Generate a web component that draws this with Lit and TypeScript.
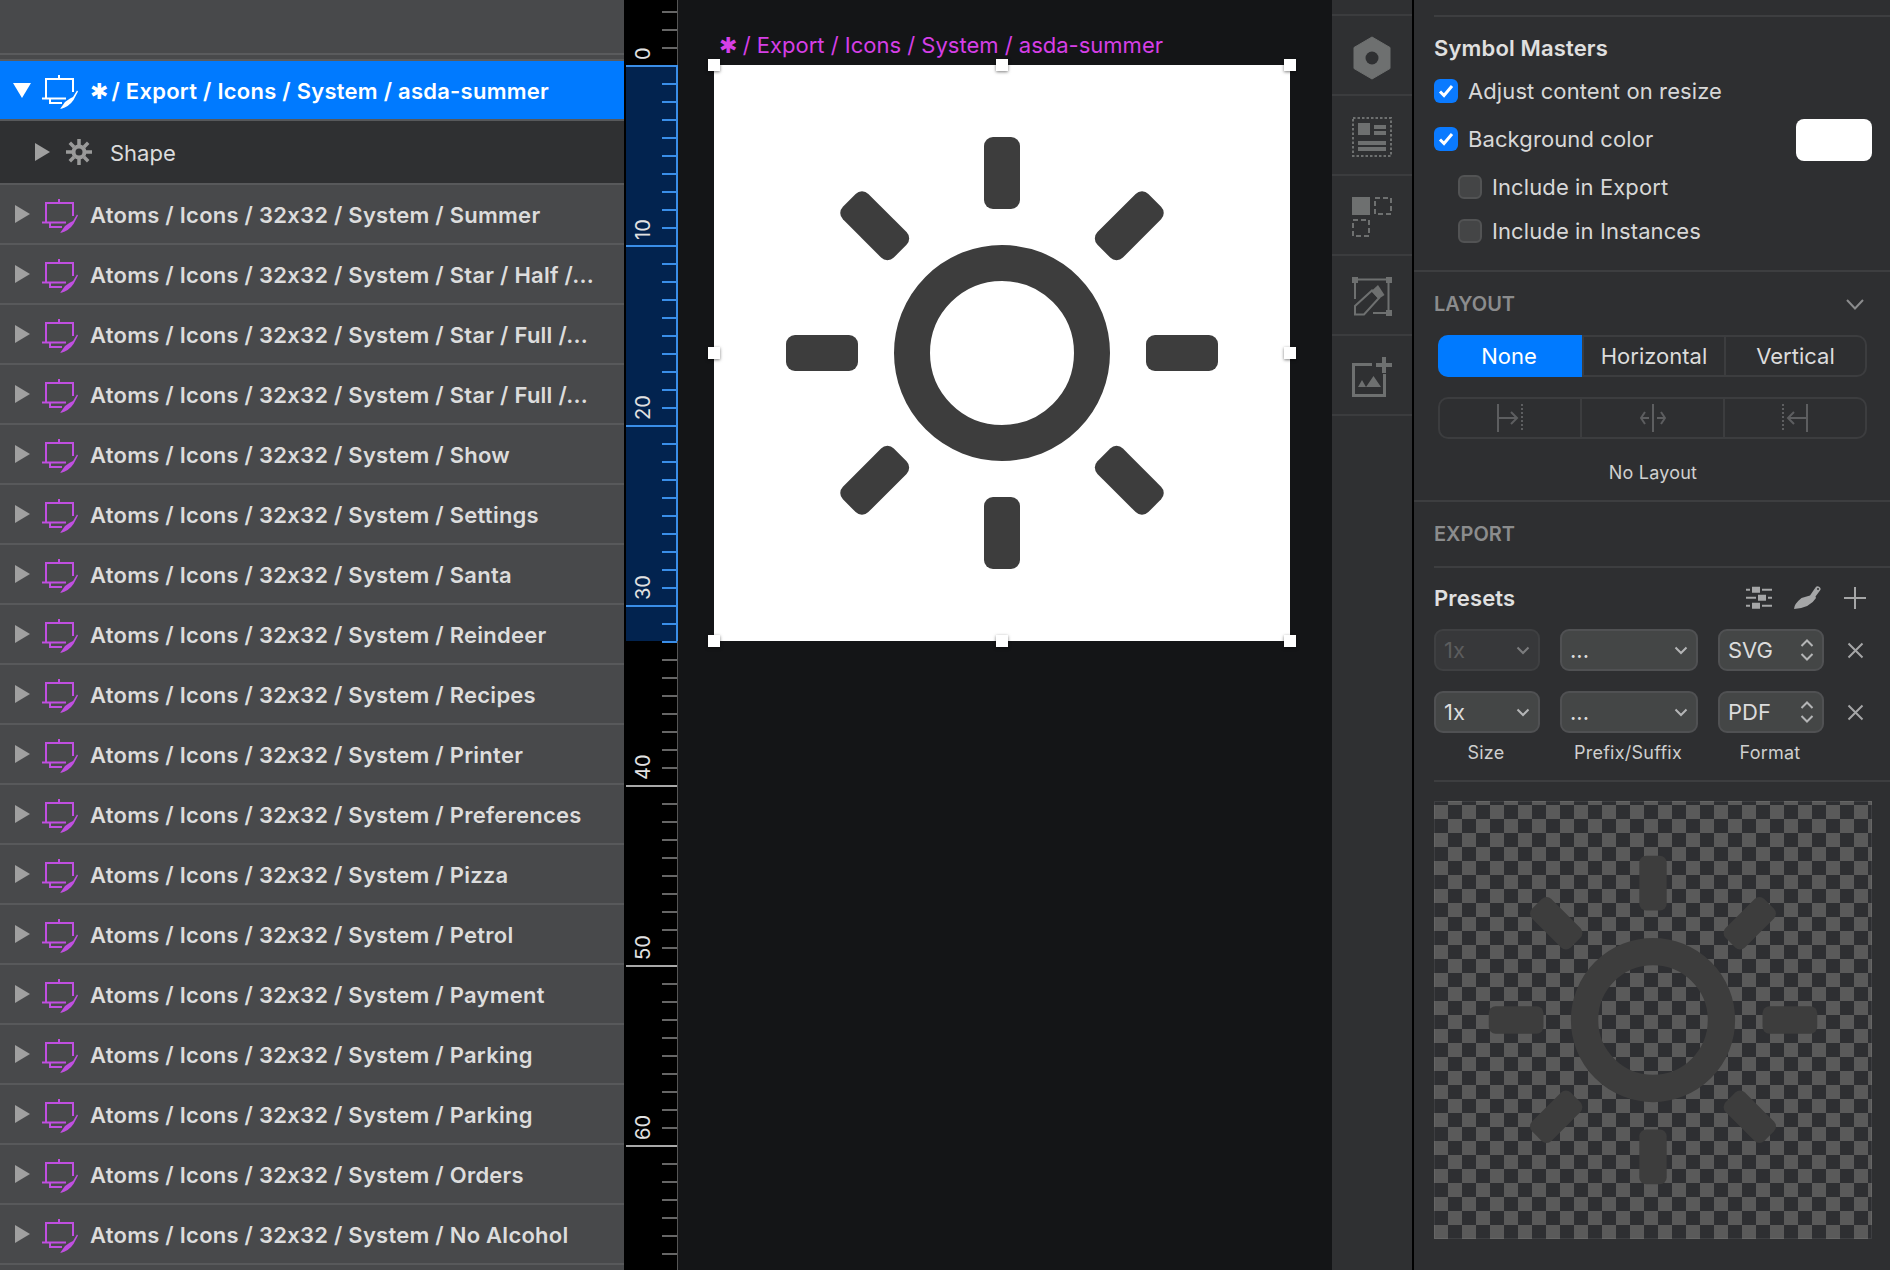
import { LitElement, html, css, svg } from 'lit';
import { customElement } from 'lit/decorators.js';

const ROWS = [
  'Atoms / Icons / 32x32 / System / Summer',
  'Atoms / Icons / 32x32 / System / Star / Half /...',
  'Atoms / Icons / 32x32 / System / Star / Full /...',
  'Atoms / Icons / 32x32 / System / Star / Full /...',
  'Atoms / Icons / 32x32 / System / Show',
  'Atoms / Icons / 32x32 / System / Settings',
  'Atoms / Icons / 32x32 / System / Santa',
  'Atoms / Icons / 32x32 / System / Reindeer',
  'Atoms / Icons / 32x32 / System / Recipes',
  'Atoms / Icons / 32x32 / System / Printer',
  'Atoms / Icons / 32x32 / System / Preferences',
  'Atoms / Icons / 32x32 / System / Pizza',
  'Atoms / Icons / 32x32 / System / Petrol',
  'Atoms / Icons / 32x32 / System / Payment',
  'Atoms / Icons / 32x32 / System / Parking',
  'Atoms / Icons / 32x32 / System / Parking',
  'Atoms / Icons / 32x32 / System / Orders',
  'Atoms / Icons / 32x32 / System / No Alcohol',
];

const artboardIcon = (color: string) => html`
  <svg class="symbol" width="36" height="34" viewBox="0 0 36 34" fill="none" stroke=${color} stroke-width="2">
    <path d="M4 23V4H31V17M17 0V4M0 23.5H24M8 24V28H20" />
    <path d="M35 15.5L36 16.5L31.500 25Q27 32 18 34Q21 30 23 27L28 23.500L31 22Z" fill=${color} stroke="none" />
  </svg>
`;

const sun = () => svg`
  <circle cx="16" cy="16" r="5" fill="none" stroke="#3d3d3d" stroke-width="2" />
  ${[0, 45, 90, 135, 180, 225, 270, 315].map(
    a => svg`<rect x="15" y="4" width="2" height="4" rx="0.5" fill="#3d3d3d" transform="rotate(${a} 16 16)" />`
  )}
`;

const chevron = () => html`
  <svg class="chev" width="14" height="9" viewBox="0 0 14 9" fill="none" stroke="#b4b5b6" stroke-width="2">
    <path d="M1.500 1.500L7 7L12.500 1.500" />
  </svg>
`;

const stepper = () => html`
  <svg class="chev" width="14" height="22" viewBox="0 0 14 22" fill="none" stroke="#b4b5b6" stroke-width="2">
    <path d="M1.500 7L7 1.500L12.500 7M1.500 15L7 20.500L12.500 15" />
  </svg>
`;

const closeIcon = () => html`
  <svg class="x" width="17" height="17" viewBox="0 0 17 17" fill="none" stroke="#a5a6a7" stroke-width="2">
    <path d="M1.500 1.500L15.500 15.500M15.500 1.500L1.500 15.500" />
  </svg>
`;

@customElement('app-root')
export class AppRoot extends LitElement {
  static styles = css`
    :host {
      display: flex;
      width: 1890px;
      height: 1270px;
      overflow: hidden;
      background: #141517;
      font-family: Inter, 'DejaVu Sans', sans-serif;
      font-feature-settings: 'calt' 0;
      color: #dcdcdc;
    }
    .layers {
      width: 624px;
      flex: none;
      background: #48494b;
      display: flex;
      flex-direction: column;
    }
    .top-gap {
      height: 53px;
      border-bottom: 2px solid #5a5b5d;
      box-sizing: content-box;
    }
    .top-gap-2 {
      height: 4px;
      border-bottom: 2px solid #5a5b5d;
    }
    .row {
      height: 58px;
      flex: none;
      display: flex;
      align-items: center;
      border-bottom: 2px solid #58595b;
      white-space: nowrap;
      font-size: 22px;
      letter-spacing: 0.25px;
      font-weight: 600;
      color: #dcdcdc;
      padding-left: 15px;
    }
    .row span {
      padding-top: 2px;
    }
    .row .star {
      padding: 0;
      margin-right: -3px;
    }
    .row.selected {
      background: #007aff;
      color: #fff;
      padding-left: 13px;
    }
    .row.child {
      height: 62px;
      background: #2f3032;
      padding-left: 35px;
      font-weight: 400;
      letter-spacing: 0;
    }
    .symbol {
      margin: 3px 12px 0 12px;
    }
    .row.selected .symbol {
      margin-left: 11px;
    }
    .gear {
      margin-left: 16px;
      margin-right: 18px;
    }
    .ruler {
      width: 54px;
      flex: none;
      display: block;
      background: #000;
    }
    .ruler text {
      font-family: Inter, sans-serif;
      font-size: 20px;
      fill: #e2e2e2;
    }
    .canvas {
      width: 654px;
      flex: none;
      box-sizing: border-box;
      padding-left: 36px;
    }
    .board-label {
      height: 65px;
      box-sizing: border-box;
      padding: 32px 0 0 5px;
      font-size: 22px;
      line-height: 26px;
      color: #d63fe6;
      white-space: nowrap;
    }
    .board-label .star {
      margin-right: -1px;
    }
    .board {
      position: relative;
      width: 576px;
      height: 576px;
      background: #fff;
    }
    .board > svg {
      display: block;
    }
    .handle {
      position: absolute;
      width: 12px;
      height: 12px;
      margin: -6px 0 0 -6px;
      background: #fff;
      box-shadow: 0 1px 3px rgba(0, 0, 0, 0.5);
    }
    .strip {
      width: 80px;
      flex: none;
      background: #2f3032;
      border-right: 2px solid #000;
    }
    .strip-top {
      height: 14px;
      border-bottom: 2px solid #3b3c3e;
    }
    .strip-cell {
      height: 80px;
      box-sizing: border-box;
      border-bottom: 2px solid #3b3c3e;
    }
    .strip-cell svg {
      display: block;
    }
    .inspector {
      flex: 1;
      background: #2e2f31;
      min-width: 0;
    }
    .sec-symbol {
      height: 272px;
      box-sizing: border-box;
      padding: 15px 18px 0 20px;
      border-bottom: 2px solid #3d3e40;
    }
    .rule {
      height: 2px;
      background: #3d3e40;
      margin-right: -18px;
    }
    .title {
      font-size: 22px;
      letter-spacing: 0.15px;
      line-height: 24px;
      font-weight: 600;
      color: #e0e0e0;
    }
    .sec-symbol .title {
      margin-top: 19px;
    }
    .check-row {
      display: flex;
      align-items: center;
      height: 24px;
      margin-top: 19px;
      font-size: 22px;
      letter-spacing: 0.1px;
      color: #d8d8d8;
    }
    .check-row + .check-row {
      margin-top: 24px;
    }
    .check-row.sub {
      padding-left: 24px;
    }
    .check-row.sub + .check-row.sub {
      margin-top: 20px;
    }
    .box {
      width: 24px;
      height: 24px;
      box-sizing: border-box;
      border-radius: 6px;
      margin-right: 10px;
      background: #0a7aff;
      display: flex;
      align-items: center;
      justify-content: center;
    }
    .box.off {
      background: #444546;
      border: 2px solid #525354;
    }
    .swatch {
      width: 76px;
      height: 42px;
      border-radius: 8px;
      background: #fff;
      margin-left: auto;
      margin-top: 2px;
    }
    .sec-layout {
      height: 230px;
      box-sizing: border-box;
      padding: 20px 0 0 20px;
      border-bottom: 2px solid #3d3e40;
    }
    .caps {
      font-size: 20px;
      line-height: 24px;
      font-weight: 600;
      color: #8b8c8d;
      display: flex;
      align-items: center;
      justify-content: space-between;
      padding-right: 26px;
    }
    .segments {
      display: grid;
      grid-template-columns: 142px 142px 1fr;
      width: 429px;
      height: 42px;
      margin: 19px 0 0 4px;
      box-sizing: border-box;
      border: 2px solid #3c3d3f;
      border-radius: 10px;
      font-size: 22px;
      color: #dcdcdc;
    }
    .segments > div {
      display: flex;
      align-items: center;
      justify-content: center;
    }
    .segments > div + div {
      border-left: 2px solid #3c3d3f;
    }
    .segments .on {
      background: #007aff;
      color: #fff;
      margin: -2px 0 -2px -2px;
      padding-right: 2px;
      border-radius: 10px 0 0 10px;
    }
    .segments.icons {
      grid-template-columns: 140px 143px 1fr;
      margin-top: 20px;
    }
    .no-layout {
      margin: 22px 18px 0 0;
      text-align: center;
      font-size: 18px;
      letter-spacing: 0.2px;
      line-height: 24px;
      color: #d0d0d0;
    }
    .sec-export {
      padding: 20px 18px 0 20px;
    }
    .sec-export .caps {
      padding: 0;
    }
    .sec-export .rule {
      margin-top: 20px;
    }
    .presets-head {
      display: flex;
      align-items: center;
      height: 24px;
      margin-top: 18px;
    }
    .presets-head .tools {
      margin-left: auto;
      margin-right: 6px;
      display: block;
    }
    .export-grid {
      display: grid;
      grid-template-columns: 106px 138px 106px 1fr;
      column-gap: 20px;
      row-gap: 20px;
      margin-top: 19px;
      align-items: center;
    }
    .select {
      height: 42px;
      box-sizing: border-box;
      display: flex;
      align-items: center;
      justify-content: space-between;
      padding: 0 8px 0 8px;
      background: #444646;
      border: 2px solid #505153;
      border-radius: 9px;
      font-size: 22px;
      color: #dcdcdc;
    }
    .select.disabled {
      background: #37383a;
      border-color: #3f4042;
      color: #5c5d5e;
    }
    .select.disabled .chev {
      opacity: 0.55;
    }
    .x {
      display: block;
      margin-left: 3px;
    }
    .labels {
      display: grid;
      grid-template-columns: 106px 138px 106px;
      column-gap: 20px;
      margin-top: 9px;
      font-size: 18px;
      letter-spacing: 0.25px;
      line-height: 22px;
      text-align: center;
      color: #cfcfcf;
    }
    .labels > div {
      padding-right: 2px;
    }
    .sec-export .rule.bottom {
      margin-top: 16px;
    }
    .preview {
      margin-top: 19px;
      width: 438px;
      height: 438px;
      background: repeating-conic-gradient(#5a5a5a 0 25%, #2e2f32 0 50%) 0 -10px / 28px 28px;
      box-shadow: inset 0 0 0 1px rgba(255, 255, 255, 0.08);
    }
    .preview svg {
      display: block;
    }
  `;

  private _ruler() {
    const ticks = [];
    for (let i = -3; i * 18 + 65 < 1270; i++) {
      const y = 65 + i * 18;
      const major = i % 10 === 0;
      const active = i >= 0 && i <= 32;
      const color = active ? '#3a8ee8' : major ? '#a8a8a8' : '#666';
      ticks.push(svg`<rect x=${major ? 2 : 38} y=${y} width=${major ? 51 : 15} height="2" fill=${color} />`);
      if (major && i >= 0) {
        ticks.push(svg`<text transform="translate(26 ${y - 5}) rotate(-90)">${i}</text>`);
      }
    }
    return html`
      <svg class="ruler" width="54" height="1270" viewBox="0 0 54 1270">
        <rect x="2" y="65" width="51" height="576" fill="#02234f" />
        <rect x="53" y="0" width="1" height="1270" fill="#555" />
        <rect x="52" y="65" width="2" height="576" fill="#3a8ee8" />
        ${ticks}
      </svg>
    `;
  }

  private _strip() {
    const c = '#6e7070';
    const cells = [
      svg`
        <path d="M40 21L58 31.500V52.500L40 63L22 52.500V31.500Z" fill=${c} stroke=${c} stroke-linejoin="round" />
        <circle cx="40" cy="42" r="6.500" fill="#2f3032" />`,
      svg`
        <rect x="21" y="22" width="38" height="38" fill="none" stroke=${c} stroke-width="2" stroke-dasharray="2.500 2" />
        <rect x="26" y="27" width="12" height="12" fill=${c} />
        <rect x="42" y="29" width="12" height="4" fill=${c} />
        <rect x="42" y="35" width="12" height="4" fill=${c} />
        <rect x="26" y="45" width="28" height="4" fill=${c} />
        <rect x="26" y="51" width="28" height="4" fill=${c} />`,
      svg`
        <rect x="20" y="21" width="18" height="18" fill=${c} />
        <rect x="43" y="22" width="16" height="16" fill="none" stroke=${c} stroke-width="2" stroke-dasharray="5 3" />
        <rect x="21" y="44" width="16" height="16" fill="none" stroke=${c} stroke-width="2" stroke-dasharray="5 3" />`,
      svg`
        <path d="M26 23.500H54M56.500 27V54M54 57H41M23 27V43" fill="none" stroke=${c} stroke-width="2" />
        <rect x="20" y="21" width="6" height="6" fill=${c} />
        <rect x="54" y="21" width="6" height="6" fill=${c} />
        <rect x="54" y="54" width="6" height="6" fill=${c} />
        <path d="M23 58.500V50L40 34.500L47 42L32 58.500Z" fill="none" stroke=${c} stroke-width="2" />
        <path d="M39.500 35L46 29L52.500 39L46.500 43Z" fill=${c} />`,
      svg`
        <path d="M40 28.500H21.500V59.500H52.500V38" fill="none" stroke=${c} stroke-width="3" />
        <rect x="44" y="27" width="16" height="4" fill=${c} />
        <rect x="50" y="21" width="4" height="16" fill=${c} />
        <path d="M26 51L30 44L34 51ZM34 51L41.500 40L49 51Z" fill=${c} />`,
    ];
    return cells.map(
      cell => html`<div class="strip-cell"><svg width="80" height="78" viewBox="0 0 80 78">${cell}</svg></div>`
    );
  }

  private _alignIcons() {
    const c = '#5d5e60';
    return [
      svg`<path d="M1 1V29M2 15H20M14 9L20 15L14 21" fill="none" stroke=${c} stroke-width="2" /><path d="M25 1V29" stroke=${c} stroke-width="2" stroke-dasharray="2 2" />`,
      svg`<path d="M13 1V29M9 15H1M5 9L1 15L5 21M17 15H25M21 9L25 15L21 21" fill="none" stroke=${c} stroke-width="2" />`,
      svg`<path d="M25 1V29M24 15H6M12 9L6 15L12 21" fill="none" stroke=${c} stroke-width="2" /><path d="M1 1V29" stroke=${c} stroke-width="2" stroke-dasharray="2 2" />`,
    ].map(icon => html`<div><svg width="26" height="30" viewBox="0 0 26 30">${icon}</svg></div>`);
  }

  private _check() {
    return html`
      <svg width="16" height="14" viewBox="0 0 16 14" fill="none" stroke="#fff" stroke-width="3">
        <path d="M2 7.500L6 11.500L14 2" />
      </svg>
    `;
  }

  render() {
    const handles = [
      [0, 0], [288, 0], [576, 0],
      [0, 288], [576, 288],
      [0, 576], [288, 576], [576, 576],
    ];
    return html`
      <div class="layers">
        <div class="top-gap"></div>
        <div class="top-gap-2"></div>
        <div class="row selected">
          <svg width="18" height="15" viewBox="0 0 18 15"><path d="M0 0H18L9 15Z" fill="#fff" /></svg>
          ${artboardIcon('#fff')}
          <span><span class="star">✱</span> / Export / Icons / System / asda-summer</span>
        </div>
        <div class="row child">
          <svg width="15" height="18" viewBox="0 0 15 18"><path d="M0 0L15 9L0 18Z" fill="#a0a0a0" /></svg>
          <svg class="gear" width="26" height="26" viewBox="0 0 26 26" fill="none" stroke="#9a9a9a">
            <circle cx="13" cy="13" r="5.500" stroke-width="4" />
            <path d="M13 0V6M13 20V26M0 13H6M20 13H26M3.800 3.800L8 8M18 18L22.200 22.200M22.200 3.800L18 8M8 18L3.800 22.200" stroke-width="3.500" />
          </svg>
          <span>Shape</span>
        </div>
        ${ROWS.map(
          name => html`
            <div class="row">
              <svg width="15" height="18" viewBox="0 0 15 18"><path d="M0 0L15 9L0 18Z" fill="#a0a0a0" /></svg>
              ${artboardIcon('#c04fe0')}
              <span>${name}</span>
            </div>
          `
        )}
      </div>

      ${this._ruler()}

      <div class="canvas">
        <div class="board-label"><span class="star">✱</span> / Export / Icons / System / asda-summer</div>
        <div class="board">
          <svg width="576" height="576" viewBox="0 0 32 32">${sun()}</svg>
          ${handles.map(
            ([x, y]) => html`<div class="handle" style="left:${x}px;top:${y}px"></div>`
          )}
        </div>
      </div>

      <div class="strip">
        <div class="strip-top"></div>
        ${this._strip()}
      </div>

      <div class="inspector">
        <div class="sec-symbol">
          <div class="rule"></div>
          <div class="title">Symbol Masters</div>
          <div class="check-row"><div class="box">${this._check()}</div>Adjust content on resize</div>
          <div class="check-row">
            <div class="box">${this._check()}</div>Background color
            <div class="swatch"></div>
          </div>
          <div class="check-row sub"><div class="box off"></div>Include in Export</div>
          <div class="check-row sub"><div class="box off"></div>Include in Instances</div>
        </div>

        <div class="sec-layout">
          <div class="caps">
            LAYOUT
            <svg width="18" height="11" viewBox="0 0 18 11" fill="none" stroke="#8b8c8d" stroke-width="2">
              <path d="M1 1L9 9.500L17 1" />
            </svg>
          </div>
          <div class="segments">
            <div class="on">None</div>
            <div>Horizontal</div>
            <div>Vertical</div>
          </div>
          <div class="segments icons">${this._alignIcons()}</div>
          <div class="no-layout">No Layout</div>
        </div>

        <div class="sec-export">
          <div class="caps">EXPORT</div>
          <div class="rule"></div>
          <div class="presets-head">
            <div class="title">Presets</div>
            <svg class="tools" width="122" height="24" viewBox="0 0 122 24" fill="none" stroke="#a5a6a7" stroke-width="2">
              <path d="M2 3.700H6M18 3.700H28M2 11.700H12M24 11.700H28M2 19.700H6M18 19.700H28" />
              <path d="M8 0.700H16V6.700H8ZM14 8.700H22V14.700H14ZM8 16.700H16V22.700H8Z" fill="#a5a6a7" stroke="none" />
              <path d="M50 23Q50 18 57.500 12L66 9.500L71.500 1.500Q73 -0.500 75.500 1Q77.500 2.500 76 4.500L71.500 10.500L72 12Q66 22 50 23Z" fill="#a5a6a7" stroke="none" />
              <circle cx="74" cy="3" r="1" fill="#2e2f31" stroke="none" />
              <path d="M111 1V23M100 12H122" />
            </svg>
          </div>
          <div class="export-grid">
            <div class="select disabled">1x ${chevron()}</div>
            <div class="select">... ${chevron()}</div>
            <div class="select">SVG ${stepper()}</div>
            ${closeIcon()}
            <div class="select">1x ${chevron()}</div>
            <div class="select">... ${chevron()}</div>
            <div class="select">PDF ${stepper()}</div>
            ${closeIcon()}
          </div>
          <div class="labels">
            <div>Size</div>
            <div>Prefix/Suffix</div>
            <div>Format</div>
          </div>
          <div class="rule bottom"></div>
          <div class="preview">
            <svg width="438" height="438" viewBox="0 0 32 32">${sun()}</svg>
          </div>
        </div>
      </div>
    `;
  }
}

declare global {
  interface HTMLElementTagNameMap {
    'app-root': AppRoot;
  }
}
